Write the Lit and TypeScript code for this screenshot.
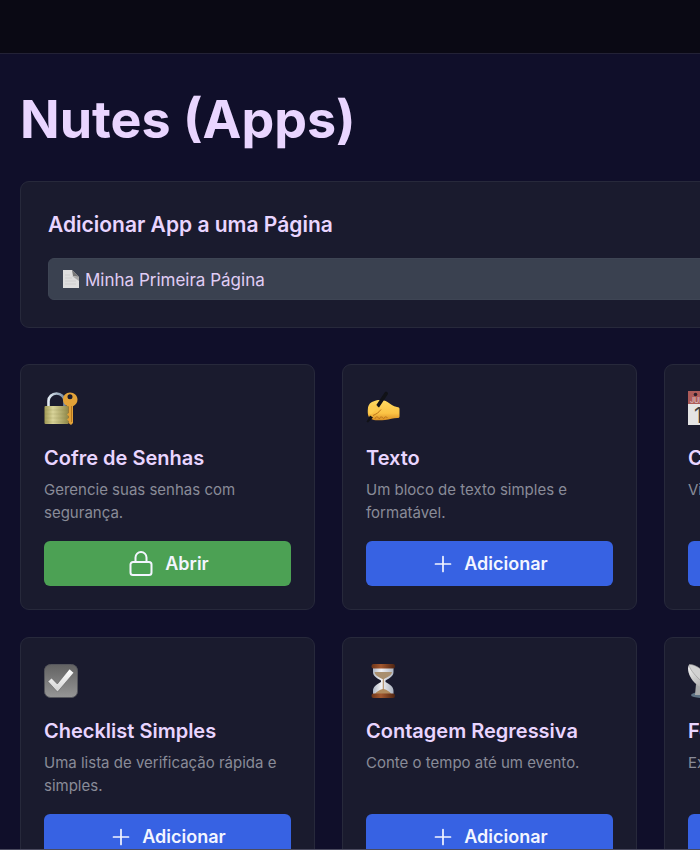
import { LitElement, html, css, svg, type TemplateResult } from "lit";
import { customElement } from "lit/decorators.js";

interface AppItem {
  title: string;
  description: string;
  icon: TemplateResult;
  vault?: boolean;
}

const vaultIcon = html`<svg class="icon" viewBox="0 0 34 34" aria-hidden="true">
  <defs>
    <linearGradient id="brass" x1="0" x2="1"><stop offset="0" stop-color="#a19a55"/><stop offset=".35" stop-color="#d9d49a"/><stop offset="1" stop-color="#8f8848"/></linearGradient>
    <linearGradient id="steel" x1="0" x2="1"><stop offset="0" stop-color="#e2ebf3"/><stop offset="1" stop-color="#7389a0"/></linearGradient>
  </defs>
  <path d="M4.500 18V10a8 7.500 0 0 1 16 0V18" fill="none" stroke="url(#steel)" stroke-width="2.600"/>
  <rect x="0.500" y="15" width="24" height="18" rx="1" fill="url(#brass)"/>
  <path d="M1 19h23M1 23h23M1 27h23M1 31h23" stroke="#8b8548" stroke-width=".5" opacity=".4"/>
  <path fill-rule="evenodd" d="M26 1.500c4.200 0 7.500 2.900 7.500 7 0 3.200-1.700 5.500-4.500 6.700V32l-2 2-2.500-2v-2l-1.500-1.500 1.500-1.500v-2L23 23.500l1.500-1.500v-6.500c-3.300-1-5.500-3.600-5.500-7 0-4.100 3-7 7-7Zm0 1.700a2.500 2.500 0 1 0 0 5 2.500 2.500 0 0 0 0-5Z" fill="#e2a238"/>
  <path d="M27.500 15v16" stroke="#b8771d" stroke-width="1"/>
</svg>`;

const writingIcon = html`<svg class="icon" viewBox="0 0 34 34" aria-hidden="true">
  <defs><linearGradient id="skin" x2="0" y2="1"><stop offset="0" stop-color="#ffda61"/><stop offset=".65" stop-color="#fbc344"/><stop offset="1" stop-color="#d98d22"/></linearGradient></defs>
  <path d="M2 16.500C3 12 6 10.500 10 9.500c4-.8 8-.5 11.500 1.500 3 2 5.500 4.500 9.500 5 1.500.2 2.500.6 2.500 2v7.500c0 1-1 1.500-2.200 1.500-4.300 0-7.300 1.500-12.300 2-5 .6-9.500.5-12.500-.5C3 27.500 1 25 2 16.500Z" fill="url(#skin)"/>
  <path d="M7 24.500c3-1.500 5.500-2.500 8-6M9 28c0-2.500 3-3 4-.3M13.500 28c0-2.500 3-2.700 4-.3M18 27.500c.5-2 2.500-2.200 3.500-.5" fill="none" stroke="#bd761b" stroke-width="1"/>
  <path d="m18.800 1.200 1.200-.7 2 1.300v1.300L13 16.500l-3-2ZM4 24.500l3 2L2 31.500l-1.500-.8Z" fill="#111217"/>
  <path d="M2.500 17.500c1.500-2 4.500-4 7.500-3.500 1.800.3 2 2.300.5 3.500L6 22.500c-2 1.500-4.500-1.500-3.500-5Z" fill="#fdcd50"/>
</svg>`;

const calendarIcon = html`<svg class="icon" viewBox="0 0 34 34" aria-hidden="true">
  <rect y="0" width="34" height="34" fill="#e4e4e4"/>
  <rect width="34" height="13" fill="#ad5b59"/>
  <circle cx="7.500" cy="3.500" r="1.800" fill="#2b1d29"/><circle cx="26.500" cy="3.500" r="1.800" fill="#2b1d29"/>
  <text x="2" y="11.500" font-family="Inter, sans-serif" font-size="7" font-weight="600" fill="#d8b9b9">JUL</text>
  <text x="6" y="32" font-family="Inter, sans-serif" font-size="21" fill="#3e3e42">17</text>
</svg>`;

const checkIcon = html`<svg class="icon" viewBox="0 0 34 34" aria-hidden="true">
  <defs>
    <linearGradient id="tile" x2="0" y2="1"><stop offset="0" stop-color="#626262"/><stop offset="1" stop-color="#969696"/></linearGradient>
    <linearGradient id="tick" x2="0" y2="1"><stop offset="0" stop-color="#ffffff"/><stop offset="1" stop-color="#d2d2d2"/></linearGradient>
  </defs>
  <rect x=".5" y=".5" width="33" height="33" rx="6" fill="url(#tile)" stroke="#55565c"/>
  <path d="m4 17.500 3.500-3.500 5.800 6L25.500 5l4.300 3.700L13.500 28Z" fill="url(#tick)" stroke="#555" stroke-width=".5"/>
</svg>`;

const hourglassIcon = html`<svg class="icon" viewBox="0 0 34 34" aria-hidden="true">
  <defs>
    <linearGradient id="wood" x1="0" x2="1"><stop offset="0" stop-color="#6d3519"/><stop offset=".4" stop-color="#a3582f"/><stop offset="1" stop-color="#4e2411"/></linearGradient>
    <linearGradient id="glass" x1="0" x2="1"><stop offset="0" stop-color="#b0b8c6"/><stop offset=".4" stop-color="#f2f2f4"/><stop offset="1" stop-color="#aeb5c2"/></linearGradient>
  </defs>
  <path d="M7 4h20.500v4c0 4-3.500 6-8 8.500v1.500c5 2.500 8 5 8 9v4H7v-4c0-4 3-6.500 8-9v-1.500C10.500 14 7 12 7 8Z" fill="url(#glass)"/>
  <path d="M8.500 8h17.500c-.5 3.500-4 5-8 7h-1.700c-4-2-7.300-3.500-7.800-7Z" fill="#a98f6e"/>
  <path d="M16.800 15h1v10c3 1 6 2.500 7.500 5H9c1.500-2.500 4.500-4 7.800-5Z" fill="#b18a5d"/>
  <rect x="5.500" y="0" width="23.500" height="4.500" rx="2" fill="url(#wood)"/>
  <rect x="5.500" y="29.500" width="23.500" height="4.500" rx="2" fill="url(#wood)"/>
</svg>`;

const dishIcon = html`<svg class="icon" viewBox="0 0 34 34" aria-hidden="true">
  <defs><linearGradient id="dish" x1="0" x2="1" y2="1"><stop offset="0" stop-color="#f4f4f4"/><stop offset="1" stop-color="#8b8b8b"/></linearGradient></defs>
  <ellipse cx="13" cy="31" rx="10" ry="3" fill="#5e7284"/>
  <path d="m8 20-1 11h13l-4-9Z" fill="#a7a9aa"/>
  <path d="M1.500.5C-2 4 1 14 8 20s18 8 21 5Z" fill="url(#dish)"/>
  <path d="M1.500.5C6 0 14 5 20 11s11 12 9 14C26 26 16 20 10 14S0 2 1.500.5Z" fill="#d2d2d2" stroke="#929292" stroke-width=".6"/>
  <path d="m15 14 12-9" stroke="#ddd" stroke-width="1.200"/>
</svg>`;

const apps: AppItem[] = [
  { title: "Cofre de Senhas", description: "Gerencie suas senhas com segurança.", icon: vaultIcon, vault: true },
  { title: "Texto", description: "Um bloco de texto simples e formatável.", icon: writingIcon },
  { title: "Calendário", description: "Visualize suas datas.", icon: calendarIcon },
  { title: "Checklist Simples", description: "Uma lista de verificação rápida e simples.", icon: checkIcon },
  { title: "Contagem Regressiva", description: "Conte o tempo até um evento.", icon: hourglassIcon },
  { title: "Feed RSS", description: "Exiba as notícias.", icon: dishIcon },
];

const plusPath = svg`<path d="M12 4.500v15M4.500 12h15"/>`;
const lockPath = svg`<path d="M9.500 12V7.500a5.500 5.500 0 0 1 11 0V12M7 12h16a2.500 2.500 0 0 1 2.500 2.500v8a2.500 2.500 0 0 1-2.500 2.500H7a2.500 2.500 0 0 1-2.500-2.500v-8A2.500 2.500 0 0 1 7 12Z"/>`;

@customElement("app-card")
export class AppCard extends LitElement {
  static properties = { item: { attribute: false } };
  declare item: AppItem;

  static styles = css`
    :host {
      display: flex;
      flex-direction: column;
      box-sizing: border-box;
      padding: 23px;
      border: 1px solid #27293b;
      border-radius: 9px;
      background: #1a1b2e;
    }
    .icon {
      display: block;
      width: 34px;
      height: 34px;
      margin: 3px 0;
    }
    .title {
      margin: 16px 0 6px;
      font-size: 20px;
      line-height: 28px;
      font-weight: 600;
      color: #e9d5ff;
    }
    .description {
      flex: 1;
      min-height: 46px;
      margin: 0 0 17px;
      font-size: 15px;
      line-height: 23px;
      color: #898b98;
    }
    .action {
      display: flex;
      align-items: center;
      justify-content: center;
      gap: 9px;
      height: 45px;
      padding: 0;
      border: 0;
      border-radius: 6px;
      background: #3762e3;
      color: #f3f5ff;
      font: 600 18px/28px Inter, sans-serif;
      cursor: pointer;
    }
    .vault {
      background: #4ca154;
    }
    .glyph {
      width: 24px;
      height: 24px;
      fill: none;
      stroke: currentColor;
      stroke-width: 1.7;
      stroke-linecap: round;
      stroke-linejoin: round;
    }
    .lock {
      width: 30px;
      height: 28px;
      stroke-width: 2;
    }
  `;

  render() {
    const { title, description, icon, vault } = this.item;
    return html`
      ${icon}
      <h3 class="title">${title}</h3>
      <p class="description">${description}</p>
      <button class="action ${vault ? "vault" : ""}" type="button">
        ${vault
          ? html`<svg class="glyph lock" viewBox="0 0 30 28" aria-hidden="true">${lockPath}</svg>Abrir`
          : html`<svg class="glyph" viewBox="0 0 24 24" aria-hidden="true">${plusPath}</svg>Adicionar`}
      </button>
    `;
  }
}

@customElement("app-root")
export class AppRoot extends LitElement {
  static styles = css`
    :host {
      display: flex;
      flex-direction: column;
      height: 100vh;
      overflow: hidden;
      background: #100f2a;
      color: #e9d5ff;
      font-family: Inter, sans-serif;
    }
    .topbar {
      flex: none;
      height: 53px;
      border-bottom: 1px solid #232236;
      background: #0a0914;
    }
    .content {
      flex: 1;
      min-height: 0;
      overflow: hidden;
      padding: 34px 0 0 20px;
    }
    .heading {
      margin: 0;
      font-size: 52px;
      line-height: 64px;
      font-weight: 700;
    }
    .sheet {
      display: grid;
      gap: 36px;
      width: max-content;
      margin-top: 29px;
    }
    .panel {
      padding: 27px;
      border: 1px solid #27293b;
      border-radius: 9px;
      background: #1a1b2e;
    }
    .label {
      display: block;
      margin-bottom: 17px;
      font-size: 21px;
      line-height: 32px;
      font-weight: 600;
    }
    .field {
      display: grid;
      align-items: center;
    }
    .field > * {
      grid-area: 1 / 1;
    }
    .page-icon {
      z-index: 1;
      width: 16px;
      height: 18px;
      margin-left: 15px;
      pointer-events: none;
    }
    .select {
      appearance: none;
      width: 100%;
      height: 42px;
      padding: 2px 16px 0 36px;
      border: 1px solid #3e4554;
      border-radius: 6px;
      background: #3a4150;
      color: #e0cdf5;
      font: 400 17px/28px Inter, sans-serif;
    }
    .grid {
      display: grid;
      grid-template-columns: repeat(3, calc(42vw + 1px));
      gap: 27px;
    }
    .bottombar {
      flex: none;
      border-top: 1px solid #4b4b5f;
    }
  `;

  render() {
    return html`
      <header class="topbar"></header>
      <main class="content">
        <h1 class="heading">Nutes (Apps)</h1>
        <div class="sheet">
          <section class="panel">
            <label class="label" for="page">Adicionar App a uma Página</label>
            <div class="field">
              <svg class="page-icon" viewBox="0 0 16 18" aria-hidden="true">
                <path d="M0 0h9l7 7v11H0Z" fill="#dedede"/>
                <path d="M9 0l7 7-6-1Z" fill="#777"/>
                <path d="M9 6l7 1v4Z" fill="#aaa"/>
                <path d="M2 5h5M2 8h7M2 11h11M2 14h11" stroke="#c8c8c8" stroke-width=".7"/>
              </svg>
              <select class="select" id="page">
                <option>Minha Primeira Página</option>
              </select>
            </div>
          </section>
          <section class="grid">
            ${apps.map((item) => html`<app-card .item=${item}></app-card>`)}
          </section>
        </div>
      </main>
      <footer class="bottombar"></footer>
    `;
  }
}
